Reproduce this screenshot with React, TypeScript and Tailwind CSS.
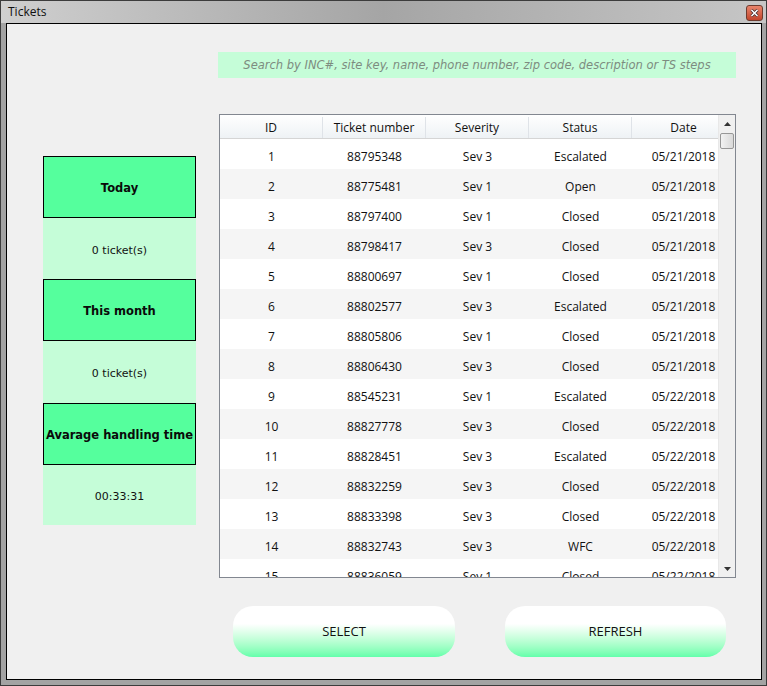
import React from "react";

type Ticket = {
  id: number;
  number: string;
  severity: string;
  status: string;
  date: string;
};

const tickets: Ticket[] = [
  { id: 1, number: "88795348", severity: "Sev 3", status: "Escalated", date: "05/21/2018" },
  { id: 2, number: "88775481", severity: "Sev 1", status: "Open", date: "05/21/2018" },
  { id: 3, number: "88797400", severity: "Sev 1", status: "Closed", date: "05/21/2018" },
  { id: 4, number: "88798417", severity: "Sev 3", status: "Closed", date: "05/21/2018" },
  { id: 5, number: "88800697", severity: "Sev 1", status: "Closed", date: "05/21/2018" },
  { id: 6, number: "88802577", severity: "Sev 3", status: "Escalated", date: "05/21/2018" },
  { id: 7, number: "88805806", severity: "Sev 1", status: "Closed", date: "05/21/2018" },
  { id: 8, number: "88806430", severity: "Sev 3", status: "Closed", date: "05/21/2018" },
  { id: 9, number: "88545231", severity: "Sev 1", status: "Escalated", date: "05/22/2018" },
  { id: 10, number: "88827778", severity: "Sev 3", status: "Closed", date: "05/22/2018" },
  { id: 11, number: "88828451", severity: "Sev 3", status: "Escalated", date: "05/22/2018" },
  { id: 12, number: "88832259", severity: "Sev 3", status: "Closed", date: "05/22/2018" },
  { id: 13, number: "88833398", severity: "Sev 3", status: "Closed", date: "05/22/2018" },
  { id: 14, number: "88832743", severity: "Sev 3", status: "WFC", date: "05/22/2018" },
  { id: 15, number: "88836059", severity: "Sev 1", status: "Closed", date: "05/22/2018" },
];

const columns = ["ID", "Ticket number", "Severity", "Status", "Date"];

const stats = [
  { label: "Today", value: "0 ticket(s)", h: "h-[61px]" },
  { label: "This month", value: "0 ticket(s)", h: "h-[62px]" },
  { label: "Avarage handling time", value: "00:33:31", h: "h-[60px]" },
];

function StatBlock({ label, value, h }: { label: string; value: string; h: string }) {
  return (
    <div className="flex flex-col">
      <div className="h-[62px] pt-[3px] flex items-center justify-center bg-[#55ff9d] border border-black text-[11.5px] font-bold text-[#0a0a0a] font-['DejaVu_Sans',sans-serif] whitespace-nowrap">
        {label}
      </div>
      <div className={`${h} pt-[5px] flex items-center justify-center bg-[#c5fdd8] text-[11px] text-[#111] font-['DejaVu_Sans',sans-serif]`}>
        {value}
      </div>
    </div>
  );
}

function ScrollBar() {
  return (
    <div className="w-[17px] h-full flex flex-col bg-[#f0f0f0] border-l border-[#e8e8e8]">
      <div className="h-[17px] flex items-center justify-center">
        <svg width="7" height="4" viewBox="0 0 7 4">
          <path d="M0 4 L3.5 0 L7 4 Z" fill="#333" />
        </svg>
      </div>
      <div className="mt-[1px] mx-[1px] h-[16px] rounded-[2px] border border-[#979797] bg-linear-to-r from-[#f2f2f2] to-[#d9d9d9]" />
      <div className="flex-1" />
      <div className="h-[17px] flex items-center justify-center">
        <svg width="7" height="4" viewBox="0 0 7 4">
          <path d="M0 0 L7 0 L3.5 4 Z" fill="#333" />
        </svg>
      </div>
    </div>
  );
}

function TicketTable() {
  return (
    <div className="ml-[1px] w-[517px] h-[464px] border border-[#828790] bg-white flex overflow-hidden">
      <div className="w-[498px] h-full overflow-hidden">
        <div className="w-[515px] font-['Open_Sans',sans-serif] text-[12px] text-[#111]">
          <div className="flex h-[24px] pt-[2px] border-b border-[#d5d5d5] bg-linear-to-b from-white to-[#eef2f5]">
            {columns.map((c) => (
              <div
                key={c}
                className="w-[103px] flex items-center justify-center border-r border-[#dfe3e8] last:border-r-0"
              >
                {c}
              </div>
            ))}
          </div>
          {tickets.map((t, i) => (
            <div
              key={t.id}
              className={`flex h-[30px] pt-[5px] ${i % 2 === 1 ? "bg-[#f5f5f5]" : "bg-white"}`}
            >
              <div className="w-[103px] flex items-center justify-center">{t.id}</div>
              <div className="w-[103px] flex items-center justify-center">{t.number}</div>
              <div className="w-[103px] flex items-center justify-center">{t.severity}</div>
              <div className="w-[103px] flex items-center justify-center">{t.status}</div>
              <div className="w-[103px] flex items-center justify-center">{t.date}</div>
            </div>
          ))}
        </div>
      </div>
      <ScrollBar />
    </div>
  );
}

export default function App() {
  return (
    <div className="w-[767px] h-[686px] flex flex-col bg-[#a3a3a3] border border-[#3c3c3c] overflow-hidden">
      {/* title bar */}
      <div className="h-[22px] shrink-0 flex items-center justify-between pl-[7px] pr-[3px] bg-linear-to-r from-[#cfcfcf] via-[#a5a5a5] to-[#c6c6c6]">
        <span className="text-[12px] text-[#111] font-['Open_Sans',sans-serif]">Tickets</span>
        <div className="w-[17px] h-[16px] mt-[2px] rounded-[3px] border border-[#6e3b2e] bg-linear-to-b from-[#e8846c] to-[#c2452b] flex items-center justify-center">
          <svg width="9" height="8" viewBox="0 0 9 8">
            <path d="M1.5 1 L7.5 7 M7.5 1 L1.5 7" stroke="#3a2a2a" strokeWidth="3" />
            <path d="M1.5 1 L7.5 7 M7.5 1 L1.5 7" stroke="#ffffff" strokeWidth="1.6" />
          </svg>
        </div>
      </div>

      {/* window body */}
      <div className="flex-1 pl-[5px] pr-[4px] pb-[5px]">
        <div className="h-full border border-black bg-[#f0f0f0] flex">
          <div className="ml-[36px] pt-[132px] w-[153px] flex flex-col">
            {stats.map((s) => (
              <StatBlock key={s.label} label={s.label} value={s.value} h={s.h} />
            ))}
          </div>

          <div className="ml-[22px] pt-[28px] w-[518px] flex flex-col">
            <div className="h-[26px] pt-[2px] bg-[#c5fdd8] flex items-center justify-center text-[11.5px] italic text-[#7d8c80] font-['DejaVu_Sans',sans-serif] whitespace-nowrap">
              Search by INC#, site key, name, phone number, zip code, description or TS steps
            </div>

            <div className="mt-[36px]">
              <TicketTable />
            </div>

            <div className="mt-[28px] flex pl-[15px] gap-[50px]">
              <button className="w-[222px] h-[51px] rounded-[20px] bg-linear-to-b from-white from-35% to-[#62ffab] text-[13px] text-[#111] font-['Open_Sans',sans-serif]">
                SELECT
              </button>
              <button className="w-[221px] h-[51px] rounded-[20px] bg-linear-to-b from-white from-35% to-[#62ffab] text-[13px] text-[#111] font-['Open_Sans',sans-serif]">
                REFRESH
              </button>
            </div>
          </div>
        </div>
      </div>
    </div>
  );
}
